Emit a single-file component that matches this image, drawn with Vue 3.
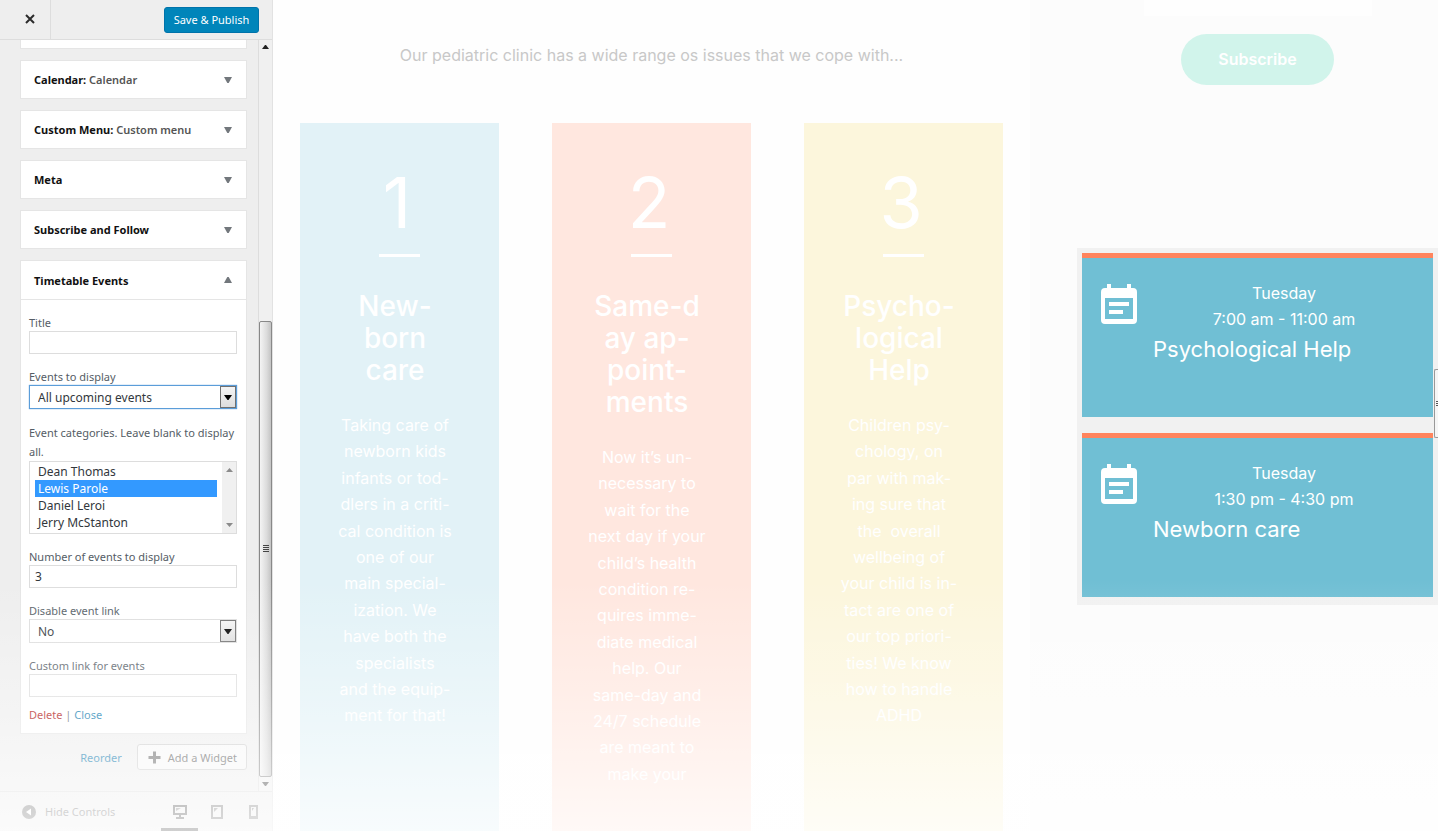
<script setup>
import { ref } from 'vue'

const widgets = [
  { name: 'Calendar:', title: 'Calendar' },
  { name: 'Custom Menu:', title: 'Custom menu' },
  { name: 'Meta', title: '' },
  { name: 'Subscribe and Follow', title: '' },
]

const title = ref('')
const display = ref('All upcoming events')
const categories = ref(['Lewis Parole'])
const categoryOptions = ['Dean Thomas', 'Lewis Parole', 'Daniel Leroi', 'Jerry McStanton']
const count = ref('3')
const disableLink = ref('No')
const customLink = ref('')

const services = [
  {
    number: '1',
    tone: 'blue',
    heading: 'New-\nborn\ncare',
    text: 'Taking care of\nnewborn kids\ninfants or tod-\ndlers in a criti-\ncal condition is\none of our\nmain special-\nization. We\nhave both the\nspecialists\nand the equip-\nment for that!',
  },
  {
    number: '2',
    tone: 'coral',
    heading: 'Same-d\nay ap-\npoint-\nments',
    text: 'Now it’s un-\nnecessary to\nwait for the\nnext day if your\nchild’s health\ncondition re-\nquires imme-\ndiate medical\nhelp. Our\nsame-day and\n24/7 schedule\nare meant to\nmake your',
  },
  {
    number: '3',
    tone: 'yellow',
    heading: 'Psycho-\nlogical\nHelp',
    text: 'Children psy-\nchology, on\npar with mak-\ning sure that\nthe  overall\nwellbeing of\nyour child is in-\ntact are one of\nour top priori-\nties! We know\nhow to handle\nADHD',
  },
]

const events = [
  { day: 'Tuesday', time: '7:00 am - 11:00 am', name: 'Psychological Help' },
  { day: 'Tuesday', time: '1:30 pm - 4:30 pm', name: 'Newborn care' },
]
</script>

<template>
  <div class="page">
    <aside class="customizer">
      <header class="topbar">
        <button class="close" type="button" aria-label="Close">
          <svg width="10" height="10" viewBox="0 0 10 10"><path d="M1 1l8 8M9 1l-8 8" stroke="#2b2b2b" stroke-width="2" fill="none" /></svg>
        </button>
        <button class="save" type="button">Save &amp; Publish</button>
      </header>

      <div class="body">
        <div class="panel">
          <div class="sliver"></div>
          <button v-for="w in widgets" :key="w.name" class="widget" type="button">
            <span>{{ w.name }} <em v-if="w.title">{{ w.title }}</em></span>
            <svg width="8" height="6" viewBox="0 0 8 6"><path d="M0 0h8L4.700 6H3.300z" fill="#72777c" /></svg>
          </button>

          <section class="widget-open">
            <button class="widget head" type="button">
              <span>Timetable Events</span>
              <svg width="8" height="6" viewBox="0 0 8 6"><path d="M0 6h8L4.700 0H3.300z" fill="#72777c" /></svg>
            </button>
            <form class="form" @submit.prevent>
              <div class="fields">
                <div class="field">
                  <label for="f-title">Title</label>
                  <input id="f-title" v-model="title" type="text" />
                </div>
                <div class="field">
                  <label for="f-display">Events to display</label>
                  <div class="drop focused">
                    <select id="f-display" v-model="display">
                      <option>All upcoming events</option>
                    </select>
                    <span class="drop-btn"><svg width="8" height="5" viewBox="0 0 8 5"><path d="M0 0h8L4.500 5h-1z" fill="#000" /></svg></span>
                  </div>
                </div>
                <div class="field">
                  <label class="multi" for="f-cats">Event categories. Leave blank to display all.</label>
                  <div class="list">
                    <select id="f-cats" v-model="categories" multiple size="4">
                      <option v-for="c in categoryOptions" :key="c">{{ c }}</option>
                    </select>
                    <span class="list-bar">
                      <svg width="7" height="4" viewBox="0 0 7 4"><path d="M0 4h7L3.500 0z" fill="#8b8b8b" /></svg>
                      <svg width="7" height="4" viewBox="0 0 7 4"><path d="M0 0h7L3.500 4z" fill="#8b8b8b" /></svg>
                    </span>
                  </div>
                </div>
                <div class="field">
                  <label for="f-count">Number of events to display</label>
                  <input id="f-count" v-model="count" type="text" />
                </div>
                <div class="field">
                  <label for="f-disable">Disable event link</label>
                  <div class="drop">
                    <select id="f-disable" v-model="disableLink">
                      <option>No</option>
                      <option>Yes</option>
                    </select>
                    <span class="drop-btn"><svg width="8" height="5" viewBox="0 0 8 5"><path d="M0 0h8L4.500 5h-1z" fill="#000" /></svg></span>
                  </div>
                </div>
                <div class="field">
                  <label for="f-link">Custom link for events</label>
                  <input id="f-link" v-model="customLink" type="text" />
                </div>
              </div>
              <p class="links"><a class="delete" href="#">Delete</a> | <a href="#">Close</a></p>
            </form>
          </section>

          <div class="actions">
            <a href="#">Reorder</a>
            <button class="add" type="button">
              <svg width="13" height="13" viewBox="0 0 13 13"><path d="M6.500 0.500v12M0.500 6.500h12" stroke="#666" stroke-width="3" /></svg>
              Add a Widget
            </button>
          </div>
        </div>

        <div class="scrollbar">
          <svg width="7" height="4" viewBox="0 0 7 4"><path d="M0 4h7L4 0H3z" fill="#222" /></svg>
          <div class="track"><div class="thumb"><i></i><i></i><i></i><i></i></div></div>
          <svg width="7" height="4" viewBox="0 0 7 4"><path d="M0 0h7L4 4H3z" fill="#444" /></svg>
        </div>
      </div>

      <footer class="footer">
        <button class="hide" type="button">
          <svg width="14" height="14" viewBox="0 0 14 14"><circle cx="7" cy="7" r="7" fill="#777" /><path d="M9 3.500v7L4 7z" fill="#fff" /></svg>
          Hide Controls
        </button>
        <div class="devices">
          <button class="device active" type="button" aria-label="Desktop">
            <svg width="14" height="14" viewBox="0 0 14 14">
              <path d="M1 1h12v8H1z" fill="none" stroke="#555" stroke-width="2" />
              <path d="M3 3h5L3 6z" fill="#888" />
              <path d="M6 10h2v2h3v2H3v-2h3z" fill="#555" />
            </svg>
          </button>
          <button class="device" type="button" aria-label="Tablet">
            <svg width="12" height="14" viewBox="0 0 12 14">
              <path d="M1 1h10v12H1z" fill="none" stroke="#777" stroke-width="2" />
              <path d="M3 3h4L3 7z" fill="#888" />
            </svg>
          </button>
          <button class="device" type="button" aria-label="Phone">
            <svg width="9" height="14" viewBox="0 0 9 14">
              <path d="M1 1h7v12H1z" fill="none" stroke="#888" stroke-width="2" />
              <path d="M3 3h2L3 6zM1 11h7v2H1z" fill="#888" />
            </svg>
          </button>
        </div>
      </footer>
    </aside>

    <main class="preview">
      <p class="intro">Our pediatric clinic has a wide range os issues that we cope with...</p>
      <div class="services">
        <article v-for="s in services" :key="s.number" class="service" :class="s.tone">
          <div class="number">{{ s.number }}</div>
          <div class="rule"></div>
          <h2>{{ s.heading }}</h2>
          <p>{{ s.text }}</p>
        </article>
      </div>
    </main>

    <aside class="side">
      <div class="newsletter">
        <div class="email"></div>
        <button class="subscribe" type="button">Subscribe</button>
      </div>
      <div class="events">
        <article v-for="e in events" :key="e.name" class="event">
          <svg width="36" height="40" viewBox="0 0 36 40">
            <path fill="#fff" fill-rule="evenodd" d="M6 0h4v4h16V0h4v4h2a4 4 0 0 1 4 4v28a4 4 0 0 1-4 4H4a4 4 0 0 1-4-4V8a4 4 0 0 1 4-4h2zM4 14v21h28V14zM8 18h20v4H8zM8 26h14v4H8z" />
          </svg>
          <div class="event-info">
            <div class="when">{{ e.day }}</div>
            <div class="when">{{ e.time }}</div>
            <h3>{{ e.name }}</h3>
          </div>
        </article>
        <div class="grip"><i></i><i></i><i></i></div>
      </div>
    </aside>

    <div class="fade"></div>
  </div>
</template>

<style>
body {
  margin: 0;
}
</style>

<style scoped>
* {
  box-sizing: border-box;
}
.page {
  position: relative;
  display: grid;
  grid-template-columns: 273px minmax(0, 757fr) minmax(0, 408fr);
  min-height: 100vh;
  background: #fefefe;
  font-family: Inter, "Open Sans", sans-serif;
}
.fade {
  position: absolute;
  inset: 580px 0 0 0;
  background: linear-gradient(rgba(255, 255, 255, 0), rgba(255, 255, 255, 0.3) 45%, rgba(255, 255, 255, 0.75));
  pointer-events: none;
}

.customizer {
  display: flex;
  flex-direction: column;
  background: #eee;
  border-right: 1px solid #e2e2e2;
  font-family: "Noto Sans", "Open Sans", sans-serif;
  font-size: 11px;
  color: #555d66;
}
button,
input,
select {
  font: inherit;
  color: inherit;
  margin: 0;
}
button {
  cursor: pointer;
}
.topbar {
  display: flex;
  justify-content: space-between;
  align-items: center;
  height: 40px;
  padding-right: 13px;
  border-bottom: 1px solid #ddd;
}
.close {
  align-self: stretch;
  width: 51px;
  padding: 0 0 0 9px;
  border: 0;
  border-right: 1px solid #ddd;
  background: none;
}
.save {
  height: 26px;
  width: 95px;
  padding: 0;
  border: 1px solid #0073aa;
  border-radius: 3px;
  background: #0085ba;
  color: #fff;
  white-space: nowrap;
}
.body {
  flex: 1;
  display: flex;
}
.panel {
  flex: 1;
  min-width: 0;
  padding: 0 11px 0 20px;
}
.sliver {
  height: 9px;
  margin-bottom: 11px;
  background: #fff;
  border: 1px solid #e5e5e5;
  border-top: 0;
}
.widget {
  display: flex;
  justify-content: space-between;
  align-items: center;
  width: 100%;
  height: 39px;
  margin-bottom: 11px;
  padding: 0 14px 0 13px;
  border: 1px solid #e5e5e5;
  background: #fff;
  color: #111;
  font-weight: 700;
}
.widget em {
  font-style: normal;
  font-weight: 600;
  color: #555;
}
.widget-open {
  border: 1px solid #e5e5e5;
  background: #fff;
}
.widget.head {
  height: 39px;
  margin: 0;
  border-width: 0 0 1px;
}
.form {
  padding: 14px 9px 10px 8px;
}
.fields {
  display: flex;
  flex-direction: column;
  gap: 14px;
}
.field label {
  display: block;
  line-height: 17px;
}
.field .multi {
  line-height: 19px;
}
.field input {
  display: block;
  width: 100%;
  height: 23px;
  padding: 0 5px;
  border: 1px solid #ddd;
  background: #fff;
  color: #32373c;
  font-size: 12px;
}
.drop {
  display: flex;
  height: 24px;
  border: 1px solid #ddd;
  color: #32373c;
  font-size: 12px;
}
.drop.focused {
  border-color: #5b9dd9;
  box-shadow: 0 0 1px #5b9dd9;
}
.drop select {
  flex: 1;
  min-width: 0;
  appearance: none;
  border: 0;
  outline: 0;
  padding: 0 8px;
  background: #fff;
}
.drop-btn {
  display: flex;
  align-items: center;
  justify-content: center;
  width: 16px;
  border: 1px solid #707070;
  background: linear-gradient(#f4f4f4, #ddd);
}
.list {
  display: flex;
  height: 73px;
  border: 1px solid #ddd;
}
.list select {
  flex: 1;
  min-width: 0;
  height: 71px;
  padding: 1px 5px;
  border: 0;
  outline: 0;
  overflow: hidden;
  background: #fff;
  color: #32373c;
  font-size: 12px;
}
.list option {
  height: 17px;
  min-height: 17px;
  padding: 0 3px;
  line-height: 17px;
}
.list option:checked {
  background: #39f linear-gradient(#39f, #39f);
  color: #fff;
  -webkit-text-fill-color: #fff;
}
.list-bar {
  display: flex;
  flex-direction: column;
  align-items: center;
  justify-content: space-between;
  width: 14px;
  padding: 6px 0;
  background: #f0f0f0;
}
a {
  color: #0073aa;
  text-decoration: none;
}
.links {
  margin: 10px 0 0;
  line-height: 16px;
}
.links .delete {
  color: #a00;
}
.actions {
  display: flex;
  justify-content: flex-end;
  align-items: center;
  gap: 15px;
  margin-top: 10px;
}
.add {
  display: flex;
  align-items: center;
  gap: 7px;
  height: 26px;
  padding: 0 9px 0 10px;
  border: 1px solid #ccc;
  border-radius: 3px;
  background: #f7f7f7;
  color: #555;
  white-space: nowrap;
}
.scrollbar {
  display: flex;
  flex-direction: column;
  align-items: center;
  width: 14px;
  padding: 5px 0;
  border-left: 1px solid #ddd;
  background: #f0f0f0;
}
.track {
  flex: 1;
  align-self: stretch;
  display: flex;
  align-items: flex-end;
  padding: 4px 0 5px;
}
.thumb {
  display: flex;
  flex-direction: column;
  align-items: center;
  justify-content: center;
  gap: 1px;
  width: 100%;
  height: 63%;
  border: 1px solid #888;
  border-radius: 2px;
  background: linear-gradient(90deg, #f4f4f4, #dcdcdc 60%, #c4c4c4);
}
.thumb i {
  width: 6px;
  height: 1px;
  background: #444;
}
.footer {
  display: flex;
  justify-content: space-between;
  height: 40px;
  border-top: 1px solid #ddd;
}
.hide {
  display: flex;
  align-items: center;
  gap: 9px;
  padding: 0 0 0 22px;
  border: 0;
  background: none;
  color: #777;
}
.devices {
  display: flex;
}
.device {
  display: flex;
  align-items: center;
  justify-content: center;
  width: 37px;
  padding: 3px 0 0;
  border: 0;
  border-bottom: 3px solid transparent;
  background: none;
}
.device.active {
  border-bottom-color: #444;
}

.preview {
  display: flex;
  flex-direction: column;
  padding: 0 27px;
}
.intro {
  margin: 0;
  padding: 42px 0 55px;
  line-height: 26px;
  font-size: 16px;
  text-align: center;
  color: #c8c8c8;
}
.services {
  flex: 1;
  display: grid;
  grid-template-columns: repeat(3, minmax(0, 1fr));
  gap: 53px;
}
.service {
  padding-top: 40px;
  color: #fff;
  text-align: center;
}
.blue {
  background: #e2f2f7;
}
.coral {
  background: #ffe7df;
}
.yellow {
  background: #fcf6dc;
}
.number {
  line-height: 80px;
  padding-right: 5px;
  font-size: 70px;
  font-weight: 400;
}
.rule {
  width: 41px;
  height: 3px;
  margin: 11px auto 33px;
  background: #fff;
}
.service h2 {
  margin: 0 0 26px;
  padding-right: 9px;
  font-size: 28px;
  font-weight: 500;
  line-height: 32px;
  white-space: pre;
}
.service p {
  margin: 0;
  padding-right: 9px;
  font-size: 16px;
  line-height: 1.65;
  white-space: pre;
}

.side {
  display: flex;
  flex-direction: column;
  padding-left: 47px;
  background: #fcfcfc;
}
.newsletter {
  display: flex;
  flex-direction: column;
  align-items: center;
  gap: 18px;
  height: 248px;
}
.email {
  width: 228px;
  height: 16px;
  background: #fefefe;
}
.subscribe {
  width: 153px;
  height: 51px;
  padding: 0 0 2px;
  border: 0;
  border-radius: 26px;
  background: #d1f4eb;
  color: #fff;
  font-size: 16px;
  font-weight: 600;
}
.events {
  position: relative;
  display: flex;
  flex-direction: column;
  gap: 16px;
  padding: 5px 5px 8px;
  background: #f1f1f1;
}
.event {
  display: flex;
  gap: 16px;
  height: 164px;
  padding: 26px 18px 0 19px;
  border-top: 5px solid #ff845d;
  background: #70bfd4;
  color: #fff;
}
.event svg {
  flex: none;
}
.event-info {
  flex: 1;
  min-width: 0;
}
.when {
  line-height: 26px;
  font-size: 16px;
  text-align: center;
}
.event .when:first-child {
  margin-top: -4px;
}
.event h3 {
  margin: 0;
  font-size: 22px;
  font-weight: 400;
  line-height: 34px;
}
.grip {
  position: absolute;
  top: 121px;
  right: 0;
  display: flex;
  flex-direction: column;
  align-items: flex-end;
  justify-content: center;
  gap: 1px;
  width: 4px;
  height: 69px;
  border: 1px solid #999;
  border-right: 0;
  border-radius: 2px 0 0 2px;
  background: #f6f6f6;
}
.grip i {
  width: 2px;
  height: 1px;
  background: #555;
}
</style>
